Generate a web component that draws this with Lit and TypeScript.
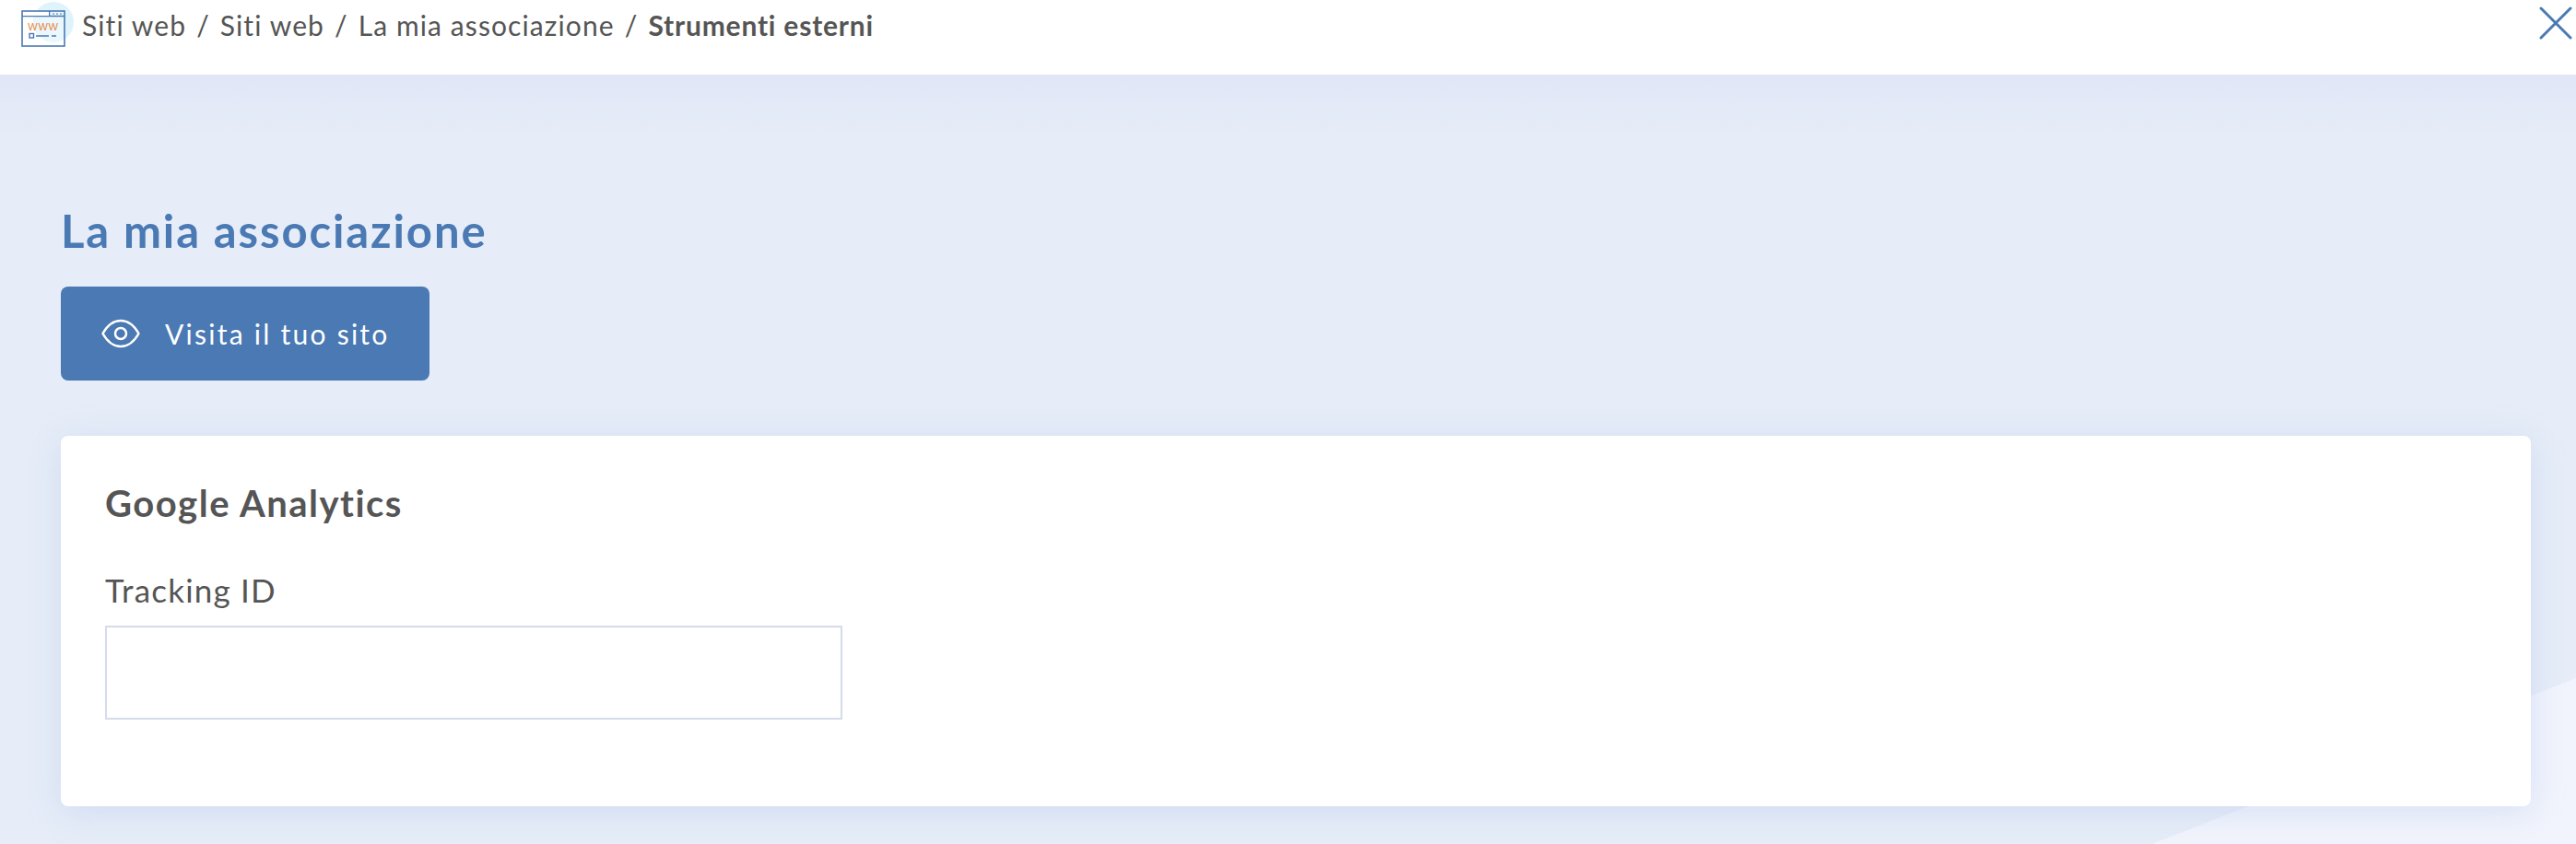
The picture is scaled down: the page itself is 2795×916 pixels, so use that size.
import { LitElement, html, css } from "lit";
import { customElement } from "lit/decorators.js";

@customElement("app-root")
export class AppRoot extends LitElement {
  static styles = css`
    :host { display: block; width: 2795px; height: 916px; overflow: hidden; font-family: "Lato", "Noto Sans", sans-serif; color: #555; background: #e6edf8; }
    .top { height: 81px; box-sizing: border-box; background: #fff; display: flex; align-items: flex-start; justify-content: space-between; padding: 2px 4px 0 21px; }
    .crumbs { display: flex; align-items: center; }
    .logo { width: 62px; height: 50px; flex: none; }
    .trail { display: flex; gap: 11px; font-size: 30px; letter-spacing: 1.1px; line-height: 50px; margin-left: 6px; white-space: nowrap; margin-top: -1px; }
    .trail b { font-weight: 700; letter-spacing: 0.8px; }
    .close { width: 36px; height: 46px; flex: none; }
    .main { position: relative; height: 835px; box-sizing: border-box; padding: 141px 49px 0 66px; background: linear-gradient(#e0e6f7 0, #e6edf8 70px); }
    .main::before { content: ""; position: absolute; inset: 0; background: #f1f4fc; clip-path: polygon(2795px 655px, 2795px 835px, 2335px 835px); }
    .content { position: relative; }
    h1 { margin: 0; font-size: 49px; line-height: 56px; font-weight: 700; color: #4a79b3; letter-spacing: 1.9px; }
    .btn { margin-top: 33px; width: 400px; height: 102px; box-sizing: border-box; border-radius: 8px; background: #4a79b3; color: #fff; display: flex; align-items: center; padding-left: 44px; gap: 27px; font-size: 30px; letter-spacing: 2.25px; }
    .btn svg { width: 42px; height: 32px; flex: none; }
    .card { margin-top: 60px; height: 402px; box-sizing: border-box; background: #fff; border-radius: 8px; box-shadow: 0 6px 36px rgba(160,180,232,.3); padding: 48px 48px 0 48px; }
    h2 { margin: 0; font-size: 40px; line-height: 50px; font-weight: 700; letter-spacing: 1.5px; }
    label { display: block; margin-top: 48px; font-size: 35px; line-height: 42px; letter-spacing: 1.2px; }
    .input { margin-top: 18px; width: 800px; height: 102px; box-sizing: border-box; border: 2px solid #d5dbe9; background: #fff; }
  `;

  render() {
    return html`
      <div class="top">
        <div class="crumbs">
          <svg class="logo" viewBox="0 0 62 50" fill="none">
            <circle cx="37" cy="22" r="22" fill="#dff3fb" />
            <rect x="3" y="10" width="46" height="38" fill="#fff" fill-opacity=".35" stroke="#4a79b3" stroke-width="1.6" />
            <path d="M3 15.500H49M32.500 10V15.500" stroke="#4a79b3" stroke-width="1.5" />
            <rect x="4" y="11" width="28" height="4" fill="#fff" />
            <path d="M36 13H38M40 13H42M44 13H46" stroke="#4a79b3" stroke-width="1.2" />
            <text x="26" y="31" text-anchor="middle" font-family="Liberation Sans" font-size="11" letter-spacing="0.800" fill="#e8853c">WWW</text>
            <rect x="11" y="34.500" width="4.500" height="4.500" stroke="#4a79b3" stroke-width="1.400" />
            <path d="M18 37H32M35 37H40" stroke="#4a79b3" stroke-width="1.400" />
          </svg>
          <div class="trail">
            <span>Siti web</span><span>/</span><span>Siti web</span><span>/</span><span>La mia associazione</span><span>/</span><b>Strumenti esterni</b>
          </div>
        </div>
        <svg class="close" viewBox="0 0 36 46" fill="none">
          <path d="M2 7L34 39M34 7L2 39" stroke="#4a79b3" stroke-width="3" stroke-linecap="round" />
        </svg>
      </div>
      <div class="main">
        <div class="content">
          <h1>La mia associazione</h1>
          <div class="btn">
            <svg viewBox="0 0 42 32" fill="none" stroke="#fff" stroke-width="2.500">
              <path d="M1.500 16C6 8 13 2 21 2C29 2 36 8 40.500 16C36 24 29 30 21 30C13 30 6 24 1.500 16Z" stroke-linejoin="round" />
              <circle cx="21" cy="16" r="6" />
            </svg>
            <span>Visita il tuo sito</span>
          </div>
          <div class="card">
            <h2>Google Analytics</h2>
            <label>Tracking ID</label>
            <div class="input"></div>
          </div>
        </div>
      </div>
    `;
  }
}
